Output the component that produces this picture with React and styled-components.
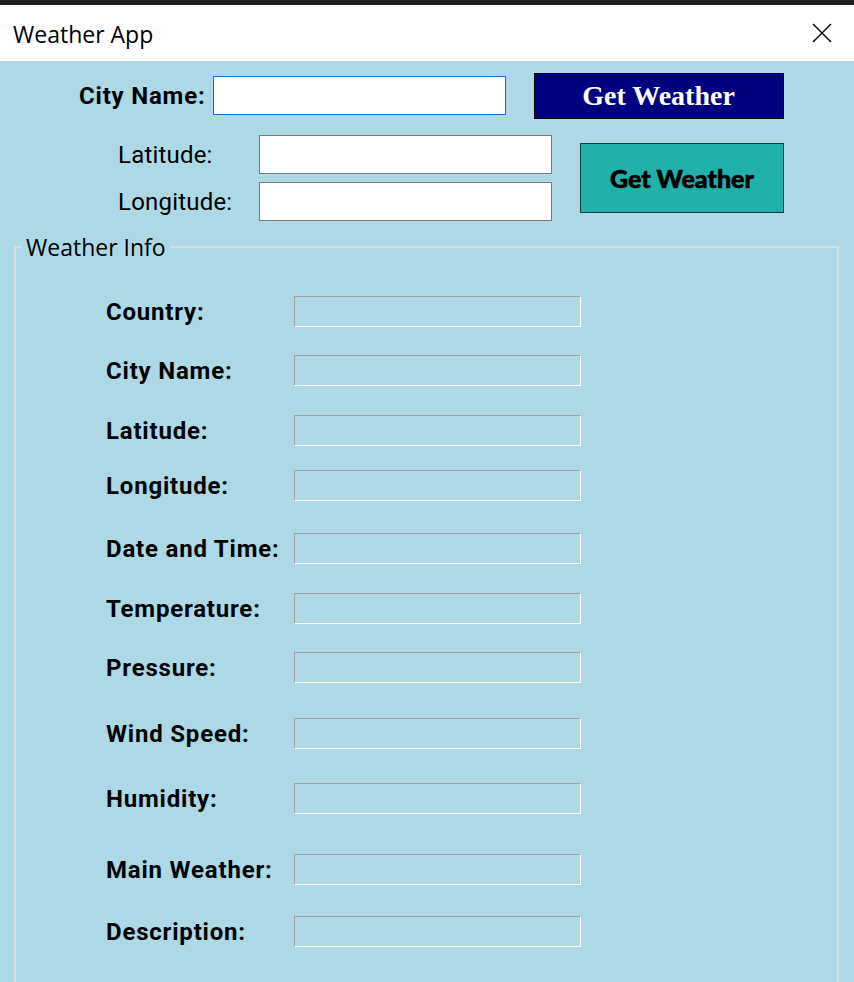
import React from 'react';
import styled, { createGlobalStyle } from 'styled-components';

const GlobalStyle = createGlobalStyle`
    html, body {
        margin: 0;
        padding: 0;
        background-color: #add8e6;
    }
    * {
        box-sizing: border-box;
    }
`;

const Janela = styled.div`
    width: 854px;
    height: 982px;
    overflow: hidden;
    background-color: #add8e6;
`;

const BordaTopo = styled.div`
    height: 5px;
    background-color: #1f1f1f;
`;

const BarraTitulo = styled.header`
    height: 56px;
    background-color: white;
    display: flex;
    align-items: center;
    justify-content: space-between;
    padding: 0 21px 0 13px;
`;

const TextoTitulo = styled.span`
    font-family: "Open Sans", sans-serif;
    font-size: 23px;
    color: #000;
    margin-top: 1px;
`;

const BotaoFechar = styled.button`
    width: 22px;
    height: 22px;
    border: none;
    background: none;
    padding: 0;
    display: flex;
    align-items: center;
    justify-content: center;
`;

const LinhaCidade = styled.div`
    display: flex;
    align-items: center;
    padding: 11px 0 0 79px;
`;

const RotuloForte = styled.label`
    font-family: Roboto, sans-serif;
    font-weight: 700;
    font-size: 24px;
    letter-spacing: 0.8px;
    color: #000;
    width: ${props => props.largura || 'auto'};
    flex-shrink: 0;
`;

const RotuloSimples = styled.label`
    font-family: Roboto, sans-serif;
    font-size: 24px;
    letter-spacing: 0.2px;
    color: #000;
`;

const Entrada = styled.input`
    width: 293px;
    height: 39px;
    background: white;
    border: 1px solid ${props => props.foco ? '#0078d7' : '#7a7a7a'};
    outline: none;
    margin-left: ${props => props.recuo || '0px'};
    font-size: 18px;
`;

const BotaoAzul = styled.button`
    width: 250px;
    height: 46px;
    margin-left: 28px;
    margin-top: 1px;
    background-color: #000080;
    border: 1px solid #000;
    color: white;
    font-family: "Liberation Serif", serif;
    font-weight: 700;
    font-size: 28px;
    padding: 0;
`;

const BlocoCoordenadas = styled.div`
    display: grid;
    grid-template-columns: 113px 293px 204px;
    grid-template-rows: 39px 39px;
    column-gap: 28px;
    row-gap: 8px;
    align-items: center;
    margin: 16px 0 0 118px;
`;

const BotaoVerde = styled.button`
    grid-column: 3;
    grid-row: 1 / span 2;
    width: 204px;
    height: 70px;
    background-color: #20b2aa;
    border: 1px solid #0f3f3c;
    color: #000;
    font-family: Lato, "Noto Sans", sans-serif;
    font-weight: 900;
    font-size: 25px;
    -webkit-text-stroke: 0.6px #000;
    padding: 0;
`;

const Quadro = styled.fieldset`
    margin: 10px 15px 0 14px;
    padding: 0 0 60px 0;
    border: 2px solid #d9dde0;
`;

const Legenda = styled.legend`
    font-family: "Open Sans", sans-serif;
    font-size: 23px;
    color: #000;
    padding: 0 4px;
    margin-left: 6px;
`;

const ListaCampos = styled.div`
    display: flex;
    flex-direction: column;
    padding-left: 90px;
`;

const LinhaCampo = styled.div`
    display: flex;
    align-items: center;
    margin-top: ${props => props.espaco}px;
`;

const CampoLeitura = styled.div`
    width: 287px;
    height: 31px;
    border-top: 1px solid #a0a0a0;
    border-left: 1px solid #a0a0a0;
    border-bottom: 1px solid #ffffff;
    border-right: 1px solid #ffffff;
`;

const campos = [
    { rotulo: 'Country:', espaco: 33 },
    { rotulo: 'City Name:', espaco: 28 },
    { rotulo: 'Latitude:', espaco: 29 },
    { rotulo: 'Longitude:', espaco: 24 },
    { rotulo: 'Date and Time:', espaco: 32 },
    { rotulo: 'Temperature:', espaco: 29 },
    { rotulo: 'Pressure:', espaco: 28 },
    { rotulo: 'Wind Speed:', espaco: 35 },
    { rotulo: 'Humidity:', espaco: 34 },
    { rotulo: 'Main Weather:', espaco: 40 },
    { rotulo: 'Description:', espaco: 31 },
];

const App = () => {
    return (
        <>
            <GlobalStyle />
            <Janela>
                <BordaTopo />
                <BarraTitulo>
                    <TextoTitulo>Weather App</TextoTitulo>
                    <BotaoFechar aria-label="Fechar">
                        <svg width="20" height="20" viewBox="0 0 20 20">
                            <path d="M1 1 L19 19 M19 1 L1 19" stroke="#000" strokeWidth="1.4" fill="none" />
                        </svg>
                    </BotaoFechar>
                </BarraTitulo>

                <LinhaCidade>
                    <RotuloForte>City Name:</RotuloForte>
                    <Entrada foco recuo="7px" />
                    <BotaoAzul>Get Weather</BotaoAzul>
                </LinhaCidade>

                <BlocoCoordenadas>
                    <RotuloSimples>Latitude:</RotuloSimples>
                    <Entrada />
                    <BotaoVerde>Get Weather</BotaoVerde>
                    <RotuloSimples>Longitude:</RotuloSimples>
                    <Entrada />
                </BlocoCoordenadas>

                <Quadro>
                    <Legenda>Weather Info</Legenda>
                    <ListaCampos>
                        {campos.map(campo => (
                            <LinhaCampo key={campo.rotulo} espaco={campo.espaco}>
                                <RotuloForte largura="188px">{campo.rotulo}</RotuloForte>
                                <CampoLeitura />
                            </LinhaCampo>
                        ))}
                    </ListaCampos>
                </Quadro>
            </Janela>
        </>
    );
}

export default App;
